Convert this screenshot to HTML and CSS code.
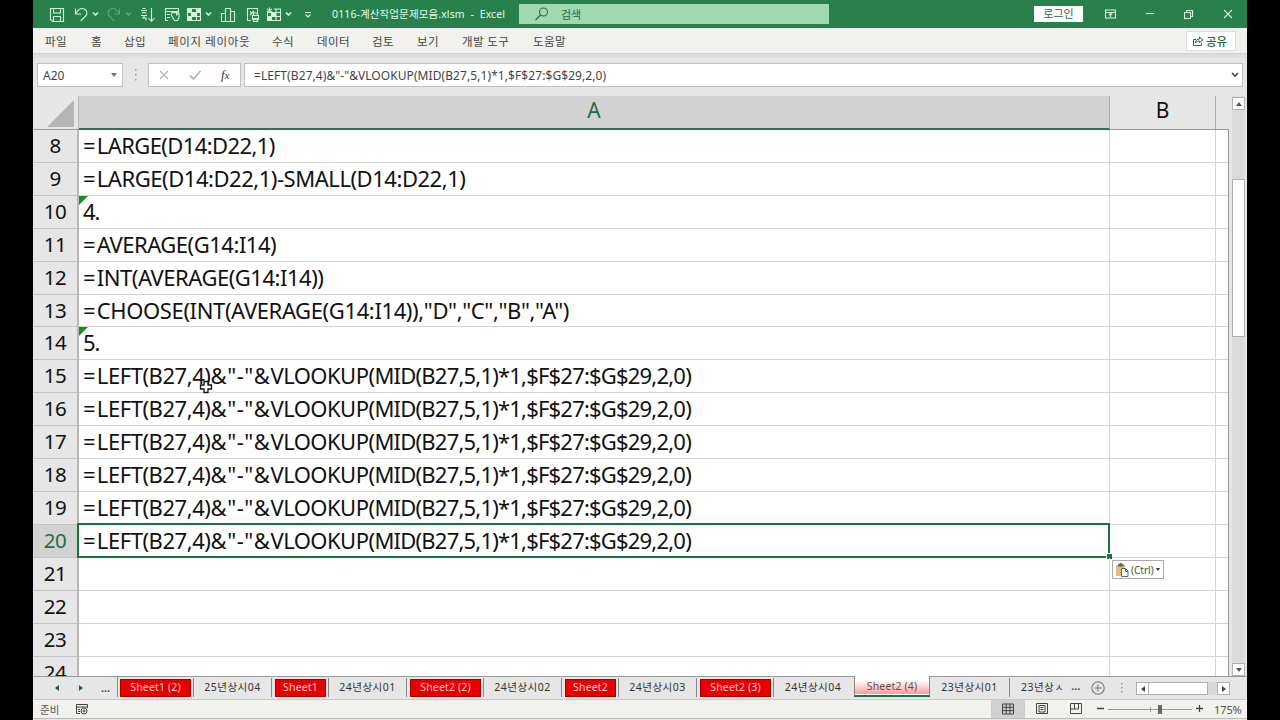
FILE: index.html
```html
<!DOCTYPE html>
<html lang="ko">
<head>
<meta charset="utf-8">
<title>0116-계산작업문제모음.xlsm - Excel</title>
<link rel="stylesheet" href="styles.css">
</head>
<body>
<div class="app">
  <header class="titlebar">
    <div class="quick">
      <svg class="ico" width="24" height="28" viewBox="0 0 24 28"><path d="M5.500 8.500h13v13h-11l-2-2zM8.500 8.500v4.500h7v-4.500M8.500 21.500v-5h7v5"/></svg>
      <svg class="ico" width="32" height="28" viewBox="0 0 32 28"><path d="M6.500 8.500v5.500h5.500M6.700 13.500c2.500-4 6-6 9-4.200 3 2 2.800 5 .5 7.200l-4.500 4.500"/><path class="bold" d="M24 12.500l2.500 2.500 2.500-2.500"/></svg>
      <svg class="ico faded" width="32" height="28" viewBox="0 0 32 28"><path d="M18.500 8.500v5.500h-5.500M18.300 13.500c-2.500-4-6-6-9-4.200-3 2-2.800 5-.5 7.200l4.500 4.500"/><path class="bold" d="M25 12.500l2.500 2.500 2.500-2.500"/></svg>
      <svg class="ico" width="26" height="28" viewBox="0 0 26 28"><path d="M9.500 8.500h3M8 10.500h6M9 13.500c0-1.500 4-1.500 4 0M8 15.500h6M11 15.500v2M9 18h4v2.500M18.500 8v13M15.500 18l3 3.500 3-3.500"/></svg>
      <svg class="ico" width="24" height="28" viewBox="0 0 24 28"><path d="M9 20.500H6.500v-12h13v4M6.500 11.500h13M8 14.500h3M8 17.500h3M12.500 15.500l3 5h3l1.500-3v-4l-2-1v3l-1-3h-4z"/></svg>
      <svg class="ico" width="34" height="28" viewBox="0 0 34 28"><path d="M4.500 8.500h13v12h-13zM8.500 8.500v12M13.500 8.500v12M4.500 12.500h13M4.500 16.500h13"/><path class="solid" d="M5 9h4v4h-4zM13 9h4v4h-4zM5 16h4v4h-4zM9 13h4v3h-4z"/><path class="bold" d="M23 12.500l2.500 2.500 2.500-2.500"/></svg>
      <svg class="ico" width="26" height="28" viewBox="0 0 26 28"><path d="M4.500 13.500h4v8h-4zM8.500 8.500h5v13h-5zM13.500 11.500h4v10h-4z"/></svg>
      <svg class="ico" width="20" height="28" viewBox="0 0 20 28"><path d="M8 20.500h-3.500v-12h10v4M7 11.500l2 2M7 15l4-4M9.500 15.500h6v4h-6zM10.500 15v-2h4v2.500M10.500 18.500h4v3h-4z"/></svg>
      <svg class="ico" width="34" height="28" viewBox="0 0 34 28"><path d="M4.500 12.500h13v8h-13zM8.500 12.500v8M13 9v11.500M4.500 16.500h13M11 9h6.500v4M6.500 7.500v5M4 9l5 3M9 9l-5 3"/><path class="solid" d="M9 13h4v3h-4zM5 17h3v3h-3z"/><path class="bold" d="M23 12.500l2.500 2.500 2.500-2.500"/></svg>
      <svg class="ico" width="16" height="28" viewBox="0 0 16 28"><path d="M8 12.500h6M8.500 14.500l2.500 2.500 2.500-2.500"/></svg>
    </div>
    <div class="doc-title">0116-계산작업문제모음.xlsm&nbsp; -&nbsp; Excel</div>
    <div class="search"><svg class="lens" width="14" height="14" viewBox="0 0 14 14"><circle cx="8.500" cy="5" r="4"/><path d="M5.500 8l-5 5"/></svg><span>검색</span></div>
    <div class="login">로그인</div>
    <div class="winbtns">
      <svg class="ico" width="14" height="12" viewBox="0 0 14 12"><path d="M1.500 2h10v8h-10zM1.500 4.500h10M6.500 9v-4M4.800 7l1.700-1.700 1.700 1.700"/></svg>
      <svg class="ico" width="14" height="12" viewBox="0 0 14 12"><path d="M3 5.500h8"/></svg>
      <svg class="ico" width="14" height="12" viewBox="0 0 14 12"><path d="M2.500 4.500h6v6h-6zM4.500 4v-1.500h6v6h-1.500"/></svg>
      <svg class="ico" width="14" height="12" viewBox="0 0 14 12"><path d="M3 2l8 8M11 2l-8 8"/></svg>
    </div>
  </header>

  <nav class="menu">
    <span class="m1">파일</span><span class="m2">홈</span><span class="m3">삽입</span><span class="m4">페이지 레이아웃</span><span class="m5">수식</span><span class="m6">데이터</span><span class="m7">검토</span><span class="m8">보기</span><span class="m9">개발 도구</span><span class="m10">도움말</span>
    <button class="share"><svg width="12" height="12" viewBox="0 0 12 12"><path d="M4 4.500H1.500v6h8V8M3.500 8c0-3 2-4 4-4V2L11 5 7.500 7.500V6C6 6 4.500 6.500 3.500 8z"/></svg>공유</button>
  </nav>

  <section class="formula">
    <div class="namebox"><span>A20</span><i class="tri-down"></i></div>
    <svg class="grip" width="4" height="12" viewBox="0 0 4 12"><path d="M1 0h1.500v1.500H1zM1 5h1.500v1.500H1zM1 10h1.500v1.500H1z"/></svg>
    <div class="fx"><svg width="90" height="22" viewBox="0 0 90 22"><path d="M11 7l8 8M19 7l-8 8" class="x"/><path d="M41 11.500l3.500 3.500 7-8" class="v"/></svg><span>f<small>x</small></span></div>
    <div class="input"><span>=LEFT(B27,4)&amp;"-"&amp;VLOOKUP(MID(B27,5,1)*1,$F$27:$G$29,2,0)</span><svg width="8" height="6" viewBox="0 0 8 6"><path d="M1 1l3 3 3-3"/></svg></div>
  </section>

  <main class="work">
    <div class="sheet">
      <div class="cols"><div class="corner"><i></i></div><div class="col-a">A</div><div class="col-b">B</div></div>
      <div class="rows">
        <div class="row"><b>8</b><div class="a"><span class="eq">=</span><span class="t1">LARGE(D14:D22,1)</span></div><div class="b"></div></div>
        <div class="row"><b>9</b><div class="a"><span class="eq">=</span><span class="t2">LARGE(D14:D22,1)-SMALL(D14:D22,1)</span></div><div class="b"></div></div>
        <div class="row"><b>10</b><div class="a flag"><span class="num">4.</span></div><div class="b"></div></div>
        <div class="row"><b>11</b><div class="a"><span class="eq">=</span><span class="t3">AVERAGE(G14:I14)</span></div><div class="b"></div></div>
        <div class="row"><b>12</b><div class="a"><span class="eq">=</span><span class="t3">INT(AVERAGE(G14:I14))</span></div><div class="b"></div></div>
        <div class="row"><b>13</b><div class="a"><span class="eq">=</span><span class="t5">CHOOSE(INT(AVERAGE(G14:I14)),"D","C","B","A")</span></div><div class="b"></div></div>
        <div class="row"><b>14</b><div class="a flag"><span class="num">5.</span></div><div class="b"></div></div>
        <div class="row"><b>15</b><div class="a"><span class="eq">=</span><span class="t6">LEFT(B27,4)</span><span class="t7">&amp;"-"&amp;</span><span class="t8">VLOOKUP(</span><span class="t9">MID(B27,5,1)*1,$F$27:$G$29,2,0)</span></div><div class="b"></div></div>
        <div class="row"><b>16</b><div class="a"><span class="eq">=</span><span class="t6">LEFT(B27,4)</span><span class="t7">&amp;"-"&amp;</span><span class="t8">VLOOKUP(</span><span class="t9">MID(B27,5,1)*1,$F$27:$G$29,2,0)</span></div><div class="b"></div></div>
        <div class="row"><b>17</b><div class="a"><span class="eq">=</span><span class="t6">LEFT(B27,4)</span><span class="t7">&amp;"-"&amp;</span><span class="t8">VLOOKUP(</span><span class="t9">MID(B27,5,1)*1,$F$27:$G$29,2,0)</span></div><div class="b"></div></div>
        <div class="row"><b>18</b><div class="a"><span class="eq">=</span><span class="t6">LEFT(B27,4)</span><span class="t7">&amp;"-"&amp;</span><span class="t8">VLOOKUP(</span><span class="t9">MID(B27,5,1)*1,$F$27:$G$29,2,0)</span></div><div class="b"></div></div>
        <div class="row"><b>19</b><div class="a"><span class="eq">=</span><span class="t6">LEFT(B27,4)</span><span class="t7">&amp;"-"&amp;</span><span class="t8">VLOOKUP(</span><span class="t9">MID(B27,5,1)*1,$F$27:$G$29,2,0)</span></div><div class="b"></div></div>
        <div class="row current"><b>20</b><div class="a selected"><span class="eq">=</span><span class="t6">LEFT(B27,4)</span><span class="t7">&amp;"-"&amp;</span><span class="t8">VLOOKUP(</span><span class="t9">MID(B27,5,1)*1,$F$27:$G$29,2,0)</span></div><div class="b"></div></div>
        <div class="row"><b>21</b><div class="a"></div><div class="b"></div></div>
        <div class="row"><b>22</b><div class="a"></div><div class="b"></div></div>
        <div class="row"><b>23</b><div class="a"></div><div class="b"></div></div>
        <div class="row"><b>24</b><div class="a"></div><div class="b"></div></div>
      </div>
    </div>
    <div class="vscroll"><div class="sbtn"><i class="up"></i></div><div class="track"><div class="thumb"></div></div><div class="sbtn"><i class="down"></i></div></div>
    <div class="paste"><svg width="14" height="14" viewBox="0 0 14 14"><path fill="#e2bd72" d="M1 2h9v3H6v8H1z"/><path fill="#666" d="M3 1h1.500a1.200 1.200 0 0 1 2.400 0H8.500v2.500H3z"/><path fill="#fff" stroke="#666" d="M6.500 5.500h4l2.500 2.500v5.500H6.500zM10.500 5.500v3H13"/></svg><span>(Ctrl)</span><i></i></div>
    <svg class="cursor" width="14" height="14" viewBox="0 0 14 14"><path d="M5 1.500h4v3.500h3.500v4H9v3.500H5V9H1.500V5H5z"/></svg>
  </main>

  <footer class="tabs">
    <div class="tabnav"><i class="left"></i><i class="right"></i><span>...</span></div>
    <div class="tab red wide">Sheet1 (2)</div><div class="tab plain">25년상시04</div>
    <div class="tab red">Sheet1</div><div class="tab plain">24년상시01</div>
    <div class="tab red wide">Sheet2 (2)</div><div class="tab plain">24년상시02</div>
    <div class="tab red">Sheet2</div><div class="tab plain">24년상시03</div>
    <div class="tab red wide">Sheet2 (3)</div><div class="tab plain last">24년상시04</div>
    <div class="tab active">Sheet2 (4)</div>
    <div class="tab plain after">23년상시01</div><div class="tab cut">23년상ㅅ</div>
    <div class="more">...</div>
    <svg class="add" width="14" height="14" viewBox="0 0 14 14"><circle cx="7" cy="7" r="6.200"/><path d="M3.500 7h7M7 3.500v7"/></svg>
    <svg class="grip" width="4" height="12" viewBox="0 0 4 12"><path d="M1 1h1.500v1.500H1zM1 5h1.500v1.500H1zM1 9h1.500v1.500H1z"/></svg>
    <div class="hscroll"><div class="sbtn"><i class="left"></i></div><div class="hthumb"></div><div class="sbtn"><i class="right"></i></div></div>
  </footer>

  <div class="status">
    <span class="ready">준비</span>
    <svg class="macro" width="12" height="11" viewBox="0 0 12 11"><path d="M4 9.500H.5v-9h11V4M.5 3h11M2 5.500h2M2 7.500h2"/><circle cx="8" cy="7" r="3"/><circle cx="8" cy="7" r="1"/></svg>
    <div class="views">
      <div class="view on"><svg width="12" height="12" viewBox="0 0 12 12"><path d="M.5 1h11v10H.5zM.5 4.300h11M.5 7.600h11M4.200 1v10M7.900 1v10"/></svg></div>
      <div class="view"><svg width="12" height="12" viewBox="0 0 12 12"><path d="M.5 .5h11v10H.5zM3 2.500h6v6.500H3zM4.500 4.500h3M4.500 6.500h3"/></svg></div>
      <div class="view"><svg width="12" height="12" viewBox="0 0 12 12"><path d="M.5 10.500V.5h11v10zM4.500 .5v5.500M8.500 .5v5.500h-8"/></svg></div>
    </div>
    <svg class="zoomer" width="108" height="14" viewBox="0 0 108 14"><path d="M1 6.500h7M100 6.500h7M103.500 3v7" class="sign"/><path d="M12 7.500h84M54.500 5v5" class="line"/><path d="M62 3h4v9h-4z" class="knob"/></svg>
    <span class="pct">175%</span>
  </div>
</div>
</body>
</html>
```

FILE: styles.css
```css
*, *::before, *::after { box-sizing: border-box; }
body { margin: 0; background: #000; overflow: hidden; }
.app { width: 1214px; height: 720px; margin-left: 33px; display: flex; flex-direction: column; background: #e6e6e6; font-family: "Noto Sans", "Noto Sans CJK KR", sans-serif; font-size: 11px; color: #333; white-space: nowrap; overflow: hidden; }
svg { display: block; flex: none; fill: none; }

.titlebar { height: 28px; flex: none; display: flex; align-items: center; background: #28804a; color: #e4fbe9; }
.quick { display: flex; width: 299px; padding-left: 12px; flex: none; }
.ico { stroke: #d0f7dc; stroke-width: 1.1; }
.ico .bold { stroke-width: 1.6; }
.ico .solid { fill: #d0f7dc; stroke: none; }
.faded { opacity: .3; }
.doc-title { width: 187px; flex: none; font-size: 10.5px; letter-spacing: .12px; padding-bottom: 2px; }
.search { width: 310px; height: 20px; flex: none; display: flex; align-items: center; gap: 12px; padding-left: 16px; background: #a0d8b0; color: #286a42; font-size: 11px; }
.lens { stroke: #286a42; stroke-width: 1.1; }
.login { width: 49px; height: 16px; margin-left: 205px; flex: none; background: #fff; color: #286a42; line-height: 15px; text-align: center; font-size: 11px; }
.winbtns { display: flex; gap: 25px; margin-left: 21px; }

.menu { height: 26px; flex: none; display: flex; align-items: center; background: #f1f1ee; border-bottom: 1px solid #d0d0d0; font-size: 11.500px; letter-spacing: .4px; color: #444; }
.menu span { flex: none; }
.m1 { width: 46px; margin-left: 12px; }
.m2 { width: 33px; }
.m3 { width: 44px; }
.m4 { width: 104px; letter-spacing: .65px; }
.m5 { width: 45px; }
.m6 { width: 55px; }
.m7 { width: 45px; }
.m8 { width: 45px; }
.m9 { width: 71px; }
.share { width: 50px; height: 20px; margin: 0 11px 0 auto; display: flex; align-items: center; gap: 2px; padding: 0 5px; background: #fff; border: 1px solid #ddd; font: 500 11.500px "Noto Sans CJK KR", sans-serif; color: #286a42; }
.share svg { stroke: #286a42; }

.formula { height: 42px; flex: none; display: flex; align-items: flex-start; padding: 9px 4px 0; background: linear-gradient(#d9d9d9, #e6e6e6 5px); }
.namebox { width: 86px; height: 24px; display: flex; align-items: center; justify-content: space-between; padding: 0 5px 0 5px; border: 1px solid #c0c0c0; background: #fff; font-size: 12px; color: #444; }
.tri-down { border: 3.500px solid transparent; border-top: 4px solid #777; border-bottom: 0; }
.grip { fill: #999; margin: 6px 10px 0 11px; }
.fx { width: 93px; height: 24px; border: 1px solid #c0c0c0; background: #fff; display: flex; }
.fx svg { margin-right: -18px; }
.fx .x, .fx .v { stroke: #b5b5b5; stroke-width: 1.3; }
.fx .v { stroke-width: 1.8; }
.fx span { font: italic 13px/22px "Liberation Serif", serif; color: #333; }
.fx small { font-size: 10px; }
.input { width: 999px; height: 24px; margin-left: 3px; padding: 0 3px 0 9px; border: 1px solid #c0c0c0; background: #fff; display: flex; align-items: center; justify-content: space-between; font-size: 12px; line-height: 21px; color: #444; letter-spacing: .08px; }
.input svg { stroke: #444; stroke-width: 1.6; }

.work { height: 580px; flex: none; display: flex; position: relative; overflow: hidden; }
.sheet { width: 1196px; border-right: 1px solid #999; }
.cols { height: 34px; display: flex; border-bottom: 1px solid #999; margin-right: -1px; background: #e6e6e6; font-size: 21px; line-height: 29px; text-align: center; color: #111; }
.corner { width: 46px; display: flex; justify-content: flex-end; align-items: flex-end; padding: 0 4px 2px 0; border-right: 1px solid #b8b8b8; }
.corner i { border-left: 27px solid transparent; border-bottom: 27px solid #b5b5b5; }
.col-a { width: 1031px; height: 34px; background: #d2d2d2; color: #286a42; border-bottom: 2px solid #2c734d; border-right: 1px solid #a8a8a8; }
.col-b { width: 106px; border-right: 1px solid #aaa; }
.rows { height: 546px; overflow: hidden; background: #fff; }
.row { height: 32.920px; display: flex; font-size: 22px; line-height: 31px; color: #111; }
.row b { width: 46px; height: 100%; flex: none; background: #e6e6e6; border-right: 2px solid #b8b8b8; border-bottom: 1px solid #c4c4c4; font-size: 20.500px; font-weight: normal; text-align: center; line-height: 31px; letter-spacing: -.6px; }
.a { width: 1031px; height: 100%; flex: none; padding-left: 4px; border-right: 1px solid #d4d4d4; border-bottom: 1px solid #d4d4d4; position: relative; }
.b { width: 106px; height: 100%; flex: none; border-right: 1px solid #d4d4d4; border-bottom: 1px solid #d4d4d4; }
.eq { letter-spacing: 1.2px; }
.num { letter-spacing: -1px; }
.t1 { letter-spacing: -.6px; }
.t2 { letter-spacing: -.46px; }
.t3 { letter-spacing: -.48px; }
.t5 { letter-spacing: -.38px; }
.t6 { letter-spacing: -.44px; }
.t7 { letter-spacing: .55px; }
.t8 { letter-spacing: -.54px; }
.t9 { letter-spacing: -.8px; }
.row::after { content: ""; flex: 1; height: 100%; border-bottom: 1px solid #d4d4d4; }
.flag::before { content: ""; position: absolute; left: 0; top: 0; border-top: 9px solid #189018; border-right: 9px solid transparent; }
.row.current b { background: #d2d2d2; color: #286a42; }
.selected::before { content: ""; position: absolute; inset: -2px -1px -1px -2px; border: 2px solid #1b7044; }
.selected::after { content: ""; position: absolute; right: -3px; bottom: -2px; width: 6px; height: 6px; background: #1b7044; border: 1px solid #fff; border-width: 1px 0 0 1px; }

.vscroll { width: 13px; margin-left: 3px; padding-top: 1px; display: flex; flex-direction: column; background: #dadada; }
.sbtn { width: 13px; height: 13px; flex: none; display: flex; align-items: center; justify-content: center; background: #fff; border: 1px solid #b0b0b0; }
.up { border: 3px solid transparent; border-bottom: 4px solid #555; border-top: 0; }
.down { border: 3px solid transparent; border-top: 4px solid #555; border-bottom: 0; }
.left { border: 3px solid transparent; border-right: 4px solid #444; border-left: 0; }
.right { border: 3px solid transparent; border-left: 4px solid #444; border-right: 0; }
.track { flex: 1; padding-top: 69px; }
.thumb { height: 158px; background: #fff; border: 1px solid #b0b0b0; }
.paste { position: absolute; left: 1079px; top: 464px; width: 52px; height: 19px; display: flex; align-items: center; padding-left: 2px; background: #fff; border: 1px solid #aaa; font-size: 10px; color: #3a5a3a; }
.paste span { margin: 0 2px 0 2px; }
.paste i { border: 2.500px solid transparent; border-top: 3px solid #333; border-bottom: 0; }
.cursor { position: absolute; left: 166px; top: 284px; fill: #fff; stroke: #111; stroke-width: 1.3; }

.tabs { height: 24px; flex: none; display: flex; align-items: flex-start; border-top: 1px solid #999; border-bottom: 1px solid #c8c8c8; background: #e6e6e6; font-size: 10.500px; }
.tabnav { width: 85px; height: 20px; flex: none; display: flex; align-items: center; padding: 1px 0 0 22px; gap: 20px; border-right: 1px solid #888; margin-right: -1px; }
.tabnav .left { border-right-color: #17603a; }
.tabnav .right { border-left-color: #17603a; }
.tabnav span { margin-left: -2px; color: #17603a; font-weight: bold; }
.tab { flex: none; height: 19px; margin-top: 1px; line-height: 18px; text-align: center; }
.red { width: 51px; height: 18px; margin: 2px 2px 0 3px; color: #ffd3d3; background: #e60000; border: 1px solid #a40000; line-height: 15px; letter-spacing: .15px; }
.wide { width: 71px; }
.plain { width: 79px; border-left: 1px solid #888; border-right: 1px solid #888; letter-spacing: .5px; }
.plain.last { border-right: 0; }
.active { width: 76px; height: 21px; margin: -1px 0 0 2px; background: linear-gradient(#fff 4px, #fdd 9px, #ff9a9a 18px, #fff 18px); border-bottom: 2px solid #1b7044; color: #66504a; line-height: 20px; letter-spacing: .15px; border-left: 1px solid #888; border-right: 1px solid #888; }
.plain.after { width: 80px; border-left: 0; }
.cut { padding-left: 11px; letter-spacing: .45px; }
.more { font-weight: bold; color: #17603a; line-height: 19px; margin-left: 7px; width: 20px; }
.add { margin-top: 4px; stroke: #777; stroke-width: 1.1; }
.tabs .grip { margin: 5px 14px 0 15px; }
.hscroll { width: 94px; height: 13px; margin: 5px 0 0 -2px; display: flex; background: #dadada; }
.hthumb { width: 59px; margin-right: auto; background: #fff; border: 1px solid #b0b0b0; border-left: 0; }

.status { height: 19px; flex: none; display: flex; align-items: center; background: #f1f1ee; border-bottom: 1px solid #bbb; padding-left: 7px; color: #555; font-size: 10.500px; }
.ready { width: 36px; flex: none; }
.macro { stroke: #444; }
.views { display: flex; margin-left: 903px; }
.view { width: 34px; height: 18px; display: flex; align-items: center; justify-content: center; }
.view svg { stroke: #444; margin-right: 1px; }
.on { background: #d0d0d0; }
.zoomer { margin-left: 3px; }
.sign { stroke: #444; stroke-width: 1.3; }
.line { stroke: #999; }
.knob { fill: #666; }
.pct { margin-left: 10px; font-size: 11px; letter-spacing: -.1px; }
```
